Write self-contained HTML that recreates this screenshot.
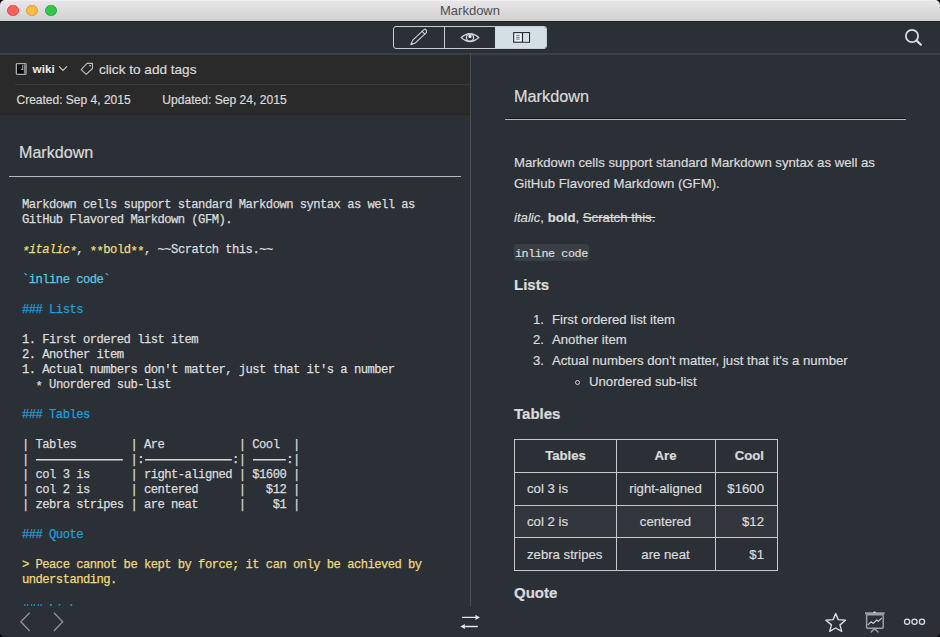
<!DOCTYPE html>
<html><head><meta charset="utf-8">
<style>
*{margin:0;padding:0;box-sizing:border-box}
html,body{width:940px;height:637px;overflow:hidden;background:#000}
body{font-family:"Liberation Sans",sans-serif;position:relative}
#win{position:absolute;left:0;top:0;width:940px;height:637px;background:#2b3037;border-radius:5px;overflow:hidden}
.a{position:absolute}
.t{position:absolute;white-space:pre;line-height:20px;color:#dadada;-webkit-text-stroke:0.2px currentColor}
.m{font-family:"Liberation Mono",monospace}
#titlebar{left:0;top:0;width:940px;height:22px;background:linear-gradient(#f6f4f6 0px,#e8e5e8 1.5px,#d0d0d0 21px);border-bottom:1px solid #1d2227}
#toolbar{left:0;top:22px;width:940px;height:33px;background:#2b3037;border-bottom:2px solid #3b4047}
#hdr{left:0;top:55px;width:470px;height:60px;background:#2a2a2a;border-bottom:1px solid #252525}
#code{position:absolute;left:22px;top:198px;font-family:"Liberation Mono",monospace;font-size:12.2px;letter-spacing:-0.54px;line-height:15.02px;white-space:pre;color:#dcdcdc;-webkit-text-stroke:0.25px currentColor}
.y{color:#efd97c}
.c{color:#58c8e6}
.b{color:#209ed6}
#code w{color:transparent;-webkit-text-stroke:0;background:linear-gradient(#d8d8d8,#d8d8d8) 0.6px 5.6px/calc(100% - 1.2px) 1.5px no-repeat}
#code u{text-decoration:none;position:relative;top:2px}
#bottom{left:0;top:606px;width:940px;height:31px;background:#2b3037}
table{border-collapse:collapse}
</style></head><body>
<div id="win">
  <div id="titlebar" class="a">
    <div class="a" style="left:7.3px;top:4.5px;width:11.6px;height:11.6px;border-radius:50%;background:#fc605c;border:0.6px solid #df4a45"></div>
    <div class="a" style="left:26.3px;top:4.5px;width:11.6px;height:11.6px;border-radius:50%;background:#fdbc40;border:0.6px solid #df9e33"></div>
    <div class="a" style="left:45.3px;top:4.5px;width:11.6px;height:11.6px;border-radius:50%;background:#34c84a;border:0.6px solid #27a93a"></div>
    <div class="t" style="left:0;width:940px;text-align:center;top:1px;font-size:13px;color:#4d4d4d;-webkit-text-stroke:0">Markdown</div>
  </div>
  <div id="toolbar" class="a">
    <!-- segmented control -->
    <div class="a" style="left:393px;top:4px;width:154px;height:23px;border:1.5px solid #c5ced4;border-radius:3px;overflow:hidden">
      <div class="a" style="left:49.5px;top:0;width:1.2px;height:21px;background:#c5ced4"></div>
      <div class="a" style="left:100.5px;top:0;width:52px;height:21px;background:#d3dee5;border-radius:0 2px 2px 0"></div>
    </div>
  </div>
  <div id="hdr" class="a">
    <div class="a" style="left:15px;top:29px;width:455px;height:1px;background:#3a3a3a"></div>
    <div class="t" style="left:32.6px;top:4px;font-size:11.7px;font-weight:bold;color:#ececec;-webkit-text-stroke:0">wiki</div>
    <div class="t" style="left:99px;top:5px;font-size:13.6px">click to add tags</div>
    <div class="t" style="left:16.5px;top:34.6px;font-size:12px">Created: Sep 4, 2015</div>
    <div class="t" style="left:162.3px;top:34.6px;font-size:12.1px">Updated: Sep 24, 2015</div>
  </div>
  <!-- left pane -->
  <div class="t" style="left:19px;top:142.2px;font-size:16.1px">Markdown</div>
  <div class="a" style="left:9px;top:176px;width:452px;height:1px;background:#b8b8b8"></div>
  <div id="code">Markdown cells support standard Markdown syntax as well as
GitHub Flavored Markdown (GFM).

<span class="y"><i><u>*</u>italic<u>*</u></i></span>, <span class="y"><u>**</u>bold<u>**</u></span>, ~~Scratch this.~~

<span class="c">`inline code`</span>

<span class="b">### Lists</span>

1. First ordered list item
2. Another item
1. Actual numbers don't matter, just that it's a number
  <u>*</u> Unordered sub-list

<span class="b">### Tables</span>

| Tables        | Are           | Cool  |
| <w>-------------</w> |:<w>-------------</w>:| <w>-----</w>:|
| col 3 is      | right-aligned | $1600 |
| col 2 is      | centered      |   $12 |
| zebra stripes | are neat      |    $1 |

<span class="b">### Quote</span>

<span class="y">&gt; Peace cannot be kept by force; it can only be achieved by
understanding.</span>

<span class="b">### Links</span></div>
  <div class="a" style="left:470px;top:53px;width:1px;height:553px;background:#4a4f56"></div>
  <!-- right pane -->
  <div class="t" style="left:514px;top:86px;font-size:16.3px">Markdown</div>
  <div class="a" style="left:505px;top:118px;width:401px;height:1px;background:#15191d"></div>
  <div class="a" style="left:505px;top:119px;width:401px;height:1px;background:#b8b8b8"></div>
  <div class="t" style="left:514px;top:153.2px;font-size:13.18px">Markdown cells support standard Markdown syntax as well as</div>
  <div class="t" style="left:514px;top:174px;font-size:13.18px">GitHub Flavored Markdown (GFM).</div>
  <div class="t" style="left:514px;top:208px;font-size:13.18px"><i>italic</i>, <b>bold</b>, <s>Scratch this.</s></div>
  <div class="a" style="left:514px;top:244px;width:75px;height:17px;background:#3a3f45;border-radius:3px"></div>
  <div class="t m" style="left:515px;top:244.3px;font-size:11.7px;letter-spacing:-0.4px;-webkit-text-stroke:0.2px currentColor;color:#dedede">inline code</div>
  <div class="t" style="left:514px;top:274.7px;font-size:15px;font-weight:bold">Lists</div>
  <div class="t" style="left:533px;top:309.9px;font-size:13.18px">1.</div>
  <div class="t" style="left:552px;top:309.9px;font-size:13.18px">First ordered list item</div>
  <div class="t" style="left:533px;top:330.4px;font-size:13.18px">2.</div>
  <div class="t" style="left:552px;top:330.4px;font-size:13.18px">Another item</div>
  <div class="t" style="left:533px;top:351.0px;font-size:13.18px">3.</div>
  <div class="t" style="left:552px;top:351.0px;font-size:13.18px">Actual numbers don't matter, just that it's a number</div>
  <div class="a" style="left:574.5px;top:379.5px;width:5px;height:5px;border:1px solid #d6d6d6;border-radius:50%"></div>
  <div class="t" style="left:589px;top:371.8px;font-size:13.18px">Unordered sub-list</div>
  <div class="t" style="left:514px;top:404.4px;font-size:15px;font-weight:bold">Tables</div>
  <!-- table -->
  <div class="a" style="left:514px;top:439px;width:264px;height:132px;border:1px solid #c8c8c8"></div>
  <div class="a" style="left:515px;top:505px;width:262px;height:33px;background:#33373d"></div>
  <div class="a" style="left:514px;top:472px;width:264px;height:1px;background:#c8c8c8"></div>
  <div class="a" style="left:514px;top:505px;width:264px;height:1px;background:#c8c8c8"></div>
  <div class="a" style="left:514px;top:537px;width:264px;height:1px;background:#c8c8c8"></div>
  <div class="a" style="left:615.5px;top:439px;width:1px;height:132px;background:#c8c8c8"></div>
  <div class="a" style="left:714.5px;top:439px;width:1px;height:132px;background:#c8c8c8"></div>
  <div class="t" style="left:515px;width:101px;text-align:center;top:446px;font-size:13.18px;font-weight:bold">Tables</div>
  <div class="t" style="left:616px;width:99px;text-align:center;top:446px;font-size:13.18px;font-weight:bold">Are</div>
  <div class="t" style="left:715px;width:49px;text-align:right;top:446px;font-size:13.18px;font-weight:bold">Cool</div>
  <div class="t" style="left:527px;top:478.5px;font-size:13.18px">col 3 is</div>
  <div class="t" style="left:616px;width:99px;text-align:center;top:478.5px;font-size:13.18px">right-aligned</div>
  <div class="t" style="left:715px;width:49px;text-align:right;top:478.5px;font-size:13.18px">$1600</div>
  <div class="t" style="left:527px;top:511.5px;font-size:13.18px">col 2 is</div>
  <div class="t" style="left:616px;width:99px;text-align:center;top:511.5px;font-size:13.18px">centered</div>
  <div class="t" style="left:715px;width:49px;text-align:right;top:511.5px;font-size:13.18px">$12</div>
  <div class="t" style="left:527px;top:544.5px;font-size:13.18px">zebra stripes</div>
  <div class="t" style="left:616px;width:99px;text-align:center;top:544.5px;font-size:13.18px">are neat</div>
  <div class="t" style="left:715px;width:49px;text-align:right;top:544.5px;font-size:13.18px">$1</div>
  <div class="t" style="left:514px;top:583.1px;font-size:15px;font-weight:bold">Quote</div>
  <div id="bottom" class="a"></div>
  <svg class="a" style="left:0;top:0" width="940" height="637" viewBox="0 0 940 637" fill="none" stroke-linecap="round" stroke-linejoin="round">
  <path d="M29.7,612.7 L20.8,621.7 L29.7,630.9" stroke="#8c9196" stroke-width="1.4" stroke-linecap="butt" stroke-linejoin="miter"/>
  <path d="M53.9,612.7 L62.7,621.7 L53.9,630.9" stroke="#8c9196" stroke-width="1.4" stroke-linecap="butt" stroke-linejoin="miter"/>
  <g stroke="#dfe7ec" stroke-width="1.4">
    <path d="M462.6,617.4 H476.5"/>
    <path d="M477.3,626.5 H463.5"/>
  </g>
  <path d="M480,617.4 L475.2,614.8 L475.8,617.4 L475.2,620 Z" fill="#dfe7ec"/>
  <path d="M460.3,626.5 L465.1,623.9 L464.5,626.5 L465.1,629.1 Z" fill="#dfe7ec"/>
  <path d="M835.7,613.6 L838.3,619.6 L845.5,620.2 L840,624.9 L841.7,631.4 L835.7,628 L829.7,631.4 L831.4,624.9 L825.9,620.2 L833.1,619.6 Z" stroke="#d5dde2" stroke-width="1.4"/>
  <rect x="865" y="612.3" width="19.6" height="2.2" fill="#9aa3a8"/>
  <ellipse cx="874.6" cy="612.3" rx="1.4" ry="0.8" fill="#dfe4e7"/>
  <rect x="866.6" y="614.8" width="16.6" height="13.4" rx="1" stroke="#9aa3a8" stroke-width="1.5"/>
  <path d="M868.2,624.6 L871,621.8 L873.2,623.4 L876.8,620 L878.4,621.4 L881.4,618.4" stroke="#c6ccd0" stroke-width="1.2"/>
  <path d="M871.2,632 L874.6,628.4 L878,632" stroke="#9aa3a8" stroke-width="1.5"/>
  <g stroke="#d5dde2" stroke-width="1.3">
    <circle cx="907.1" cy="621.8" r="2.6"/>
    <circle cx="914.5" cy="621.8" r="2.6"/>
    <circle cx="922" cy="621.8" r="2.6"/>
  </g>
  </svg>
<svg class="a" style="left:0;top:0" width="940" height="637" viewBox="0 0 940 637" fill="none" stroke-linecap="round" stroke-linejoin="round">
  <!-- pencil -->
  <g stroke="#c9d3d9" stroke-width="1.1">
    <path d="M410.8,44.6 L412.78,40.13 L424.0,29.61 Q426.4,27.9 426.6,32.39 L415.38,42.9 Z"/>
    <path d="M422.18,31.33 L424.78,34.1"/>
  </g>
  <path d="M410.6,44.9 L411.6,42.2 L413.4,44.0 Z" fill="#c9d3d9"/>
  <!-- eye -->
  <g stroke="#c9d3d9" stroke-width="1.3">
    <path d="M461.2,37.6 Q470,29.6 478.8,37.6 Q470,45.6 461.2,37.6 Z"/>
    <circle cx="470" cy="37.6" r="3.6"/>
  </g>
  <circle cx="470" cy="36.4" r="1.6" fill="#eef3f6"/>
  <!-- book -->
  <rect x="513.7" y="32.6" width="15.8" height="9.6" stroke="#24282c" stroke-width="1.1" fill="#eef4f7" stroke-linejoin="miter"/>
  <rect x="523.4" y="33.5" width="5.2" height="7.8" fill="#d3dee5"/>
  <path d="M522.5,32.6 V42.2" stroke="#24282c" stroke-width="1.2" stroke-linecap="butt"/>
  <g stroke="#5f666c" stroke-width="0.9" stroke-linecap="butt">
    <path d="M516.1,35.4 H519.7 M516.1,37.4 H519.7 M516.1,39.1 H519.7"/>
  </g>
  <!-- search -->
  <circle cx="912" cy="36" r="6.1" stroke="#d3dde3" stroke-width="1.8"/>
  <path d="M916.6,40.6 L920.9,44.7" stroke="#d3dde3" stroke-width="2.2"/>
  <!-- notebook -->
  <rect x="16.35" y="63.65" width="9.7" height="10.65" rx="0.8" stroke="#a8adb1" stroke-width="1.3" fill="#0a0a0a"/>
  <rect x="23.9" y="64.3" width="1.5" height="9.4" fill="#8a8f93"/>
  <path d="M22.7,65 V69.4 H21.2" stroke="#9ca1a5" stroke-width="1.1" stroke-linecap="butt" stroke-linejoin="miter"/>
  <!-- chevron -->
  <path d="M59.3,66.6 L63,70.4 L66.7,66.6" stroke="#c3c8cc" stroke-width="1.2"/>
  <!-- tag -->
  <path d="M92.5,63.2 L87,63.4 L81.2,69.6 L86.2,74.4 L92.5,68.5 Z" stroke="#b8bdc1" stroke-width="1.1"/>
  <circle cx="90.1" cy="65.6" r="0.9" fill="#b8bdc1"/>
</svg>
</div>
</body></html>
